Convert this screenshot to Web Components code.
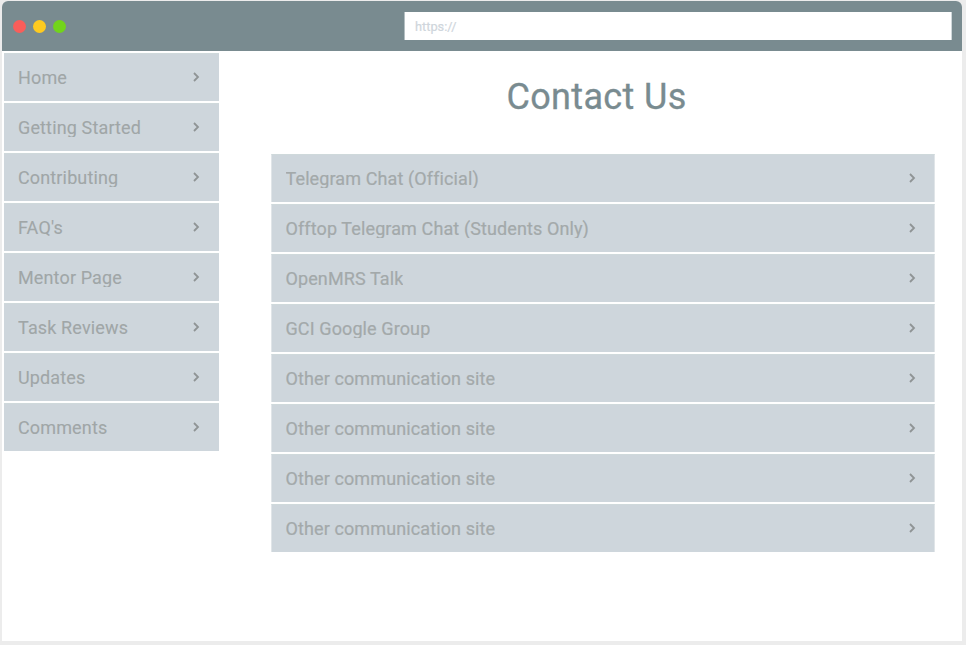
<!DOCTYPE html>
<html lang="en">
<head>
<meta charset="utf-8">
<title>Contact Us</title>
<style>
html,body{margin:0;height:100%;background:#ececec;overflow:hidden}
body{font-family:Roboto,"Liberation Sans",sans-serif}
</style>
</head>
<body>
<browser-window>
  <window-bar slot="bar"></window-bar>
  <link-list slot="side">
    <link-row>Home</link-row><link-row>Getting Started</link-row><link-row>Contributing</link-row><link-row>FAQ's</link-row><link-row>Mentor Page</link-row><link-row>Task Reviews</link-row><link-row>Updates</link-row><link-row>Comments</link-row>
  </link-list>
  <page-title>Contact Us</page-title>
  <link-list class="wide">
    <link-row>Telegram Chat (Official)</link-row><link-row>Offtop Telegram Chat (Students Only)</link-row><link-row>OpenMRS Talk</link-row><link-row>GCI Google Group</link-row><link-row>Other communication site</link-row><link-row>Other communication site</link-row><link-row>Other communication site</link-row><link-row>Other communication site</link-row>
  </link-list>
</browser-window>
<script>
const define = (name, html) => customElements.define(name, class extends HTMLElement {
  constructor() {
    super();
    this.attachShadow({ mode: "open" }).innerHTML = html;
  }
});

define("browser-window", `<style>
:host{display:flex;flex-direction:column;box-sizing:border-box;width:960px;height:640px;margin:1px 0 0 2px;background:#fff;border-radius:6px 6px 0 0;overflow:hidden}
.body{display:grid;grid-template-columns:215px 664px;column-gap:52px;padding:2px 0 0 2px}
main{display:block}
::slotted(.wide){--label-color:#a3a9aa;--label-stroke:.2px;--label-spacing:.11px;--edge:1px solid #e0e5e8;--row-padding:0 18px 2px 13.5px}
</style><slot name="bar"></slot><div class="body"><slot name="side"></slot><main><slot></slot></main></div>`);

define("window-bar", `<style>
:host{display:flex;align-items:center;justify-content:space-between;box-sizing:border-box;height:50px;flex:none;padding:0 10px 0 11px;background:#798b90}
.dots{display:flex;gap:7px}
i{width:13px;height:13px;border-radius:50%}
.url{box-sizing:border-box;width:548px;height:28px;padding-left:10px;border-left:1px solid #b4bfc2;border-right:1px solid #cfd7da;background:#fff;color:#cfd6dc;font-size:12.8px;line-height:29px;-webkit-text-stroke:.2px}
</style><div class="dots"><i style="background:#f95e5a"></i><i style="background:#fecb20"></i><i style="background:#72d41b"></i></div><div class="url">https://</div>`);

define("page-title", `<style>
:host{display:block;box-sizing:border-box;height:101px;padding-right:13px;text-align:center;color:#798b90;font-size:36px;line-height:88px;letter-spacing:.35px;-webkit-text-stroke:.3px}
</style><slot></slot>`);

define("link-list", `<style>
:host{display:flex;flex-direction:column;gap:2px}
</style><slot></slot>`);

define("link-row", `<style>
:host{display:flex;align-items:center;justify-content:space-between;box-sizing:border-box;height:48px;padding:var(--row-padding,0 19px 2px 14px);background:#ced6dc;border-top:1px solid #cfd9db;border-left:var(--edge,0);border-right:var(--edge,0);color:var(--label-color,#a0a6a7);font-size:18px;letter-spacing:var(--label-spacing,.14px);-webkit-text-stroke:var(--label-stroke,.1px)}
.label{height:20px;line-height:22px;overflow:hidden;white-space:nowrap}
svg{display:block;width:8px;height:10px}
</style><span class="label"><slot></slot></span><svg viewBox="0 0 8 10" fill="none" stroke="#8f9495" stroke-width="1.8"><path d="M2 1 6 5 2 9"/></svg>`);
</script>
</body>
</html>
